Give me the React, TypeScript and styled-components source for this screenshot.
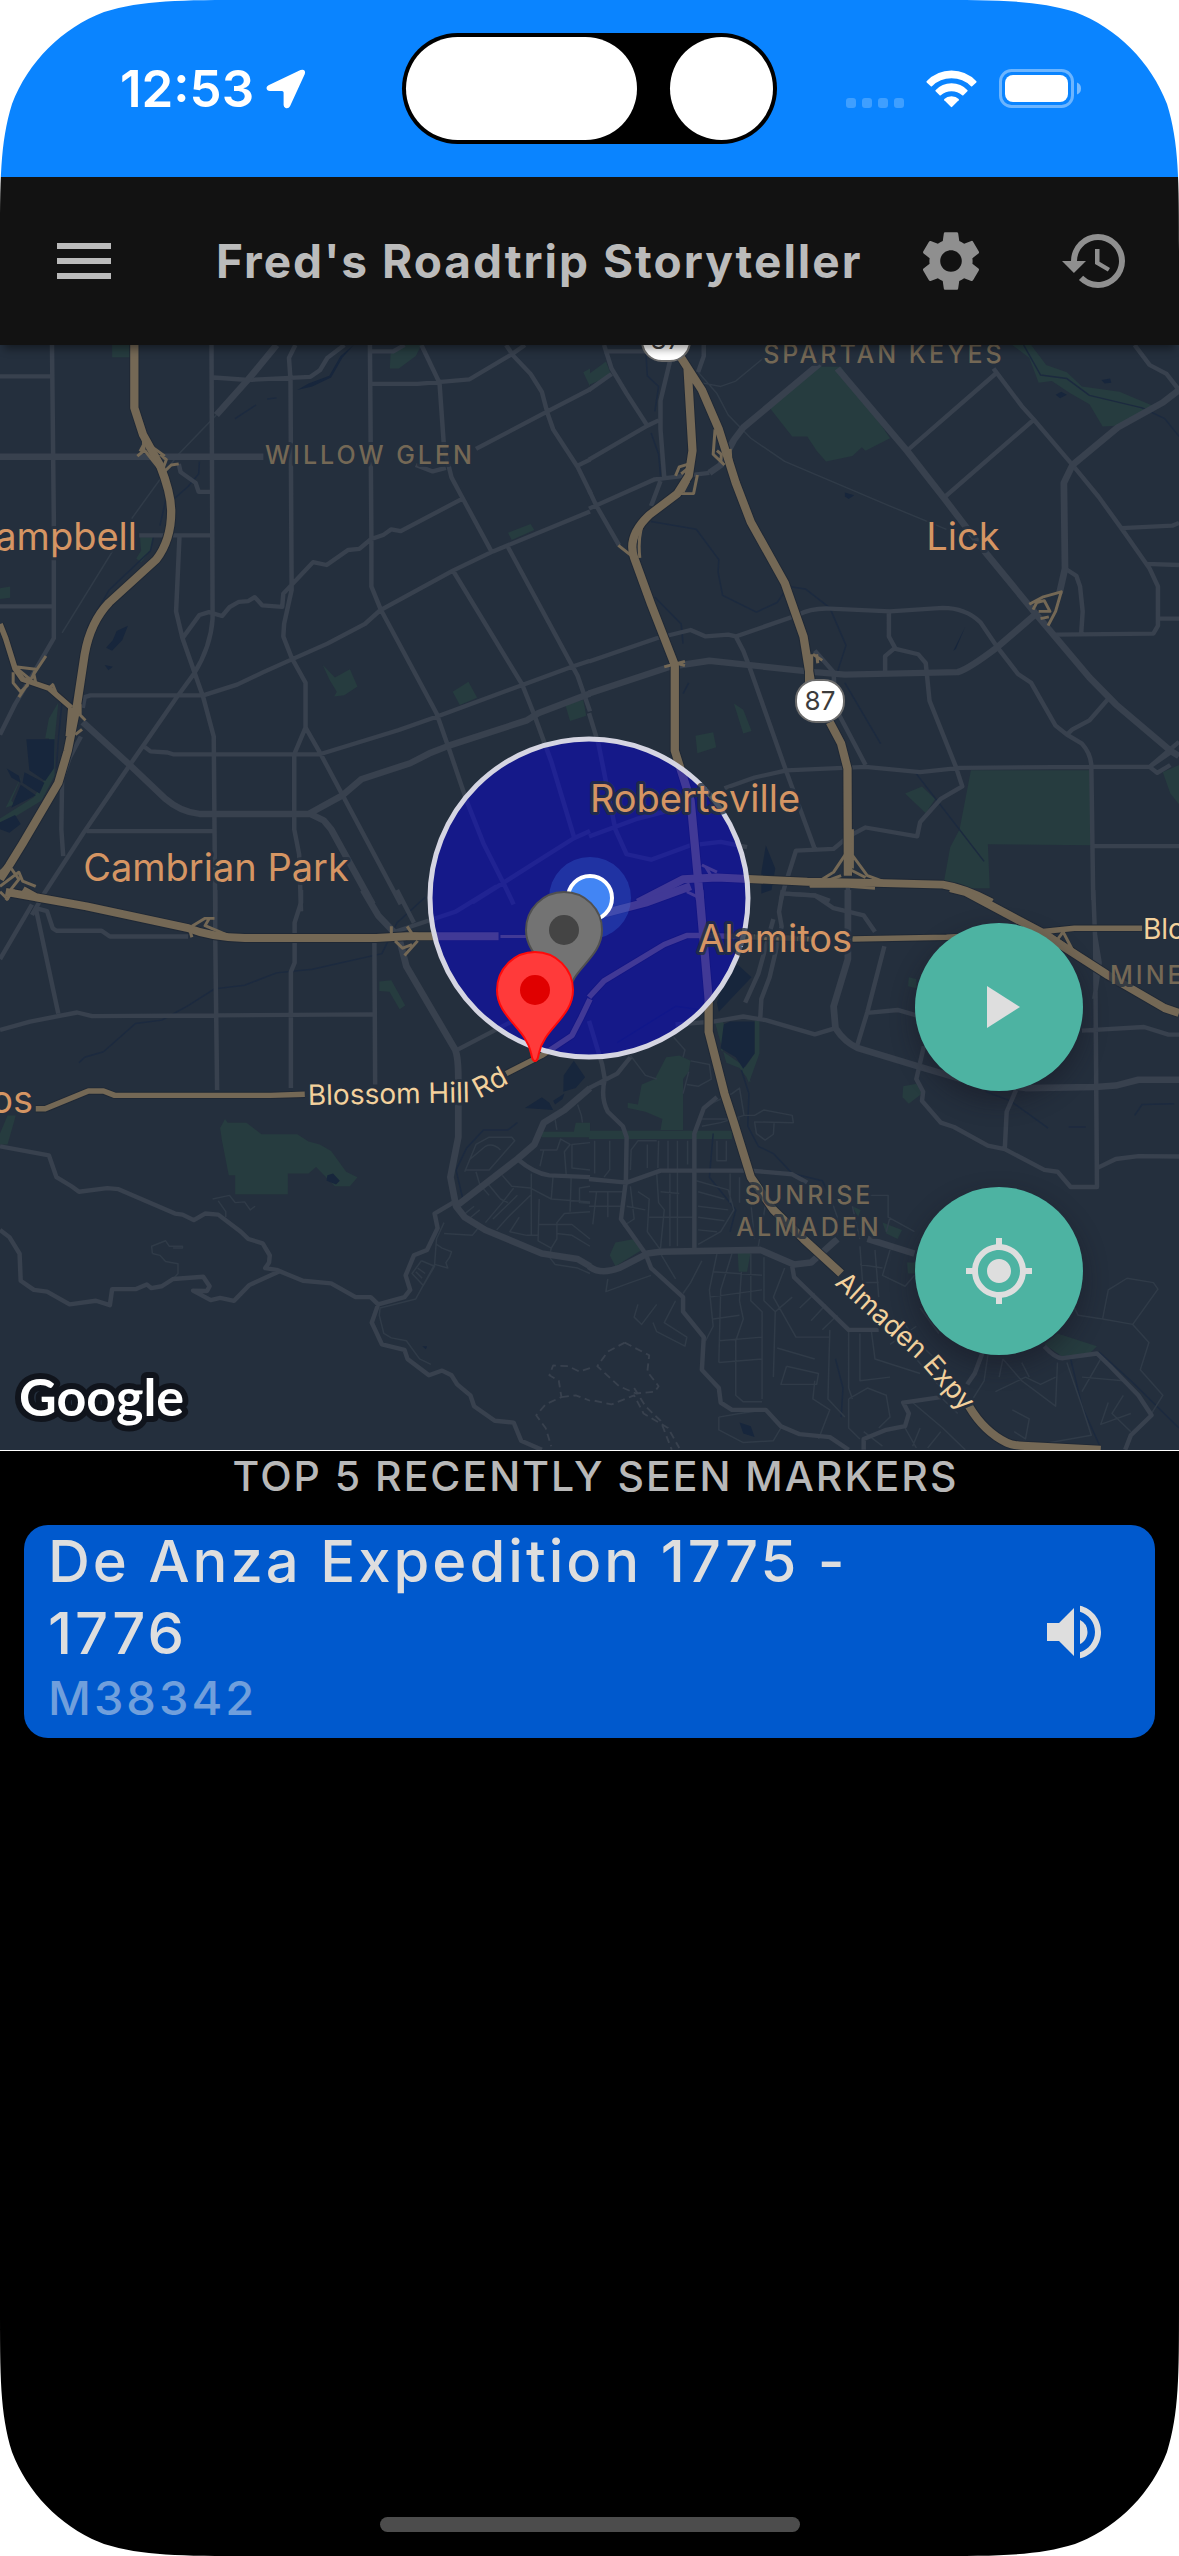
import React from "react";
import styled, { createGlobalStyle } from "styled-components";
import {
  MdHistory,
  MdMenu,
  MdMyLocation,
  MdPlayArrow,
  MdSettings,
  MdVolumeUp,
} from "react-icons/md";

const sans = `Inter, "Liberation Sans", sans-serif`;

const GlobalStyle = createGlobalStyle`
  *, *::before, *::after { box-sizing: border-box; }
  body { margin: 0; background: #000; }
  h1, h2, h3, p, ul { margin: 0; padding: 0; }
  button { border: 0; padding: 0; background: none; color: inherit; font: inherit; cursor: pointer; }
`;

const Screen = styled.div`
  position: relative;
  display: flex;
  flex-direction: column;
  min-height: 100vh;
  overflow: hidden;
  background: #000;
  font-family: ${sans};
`;

const Corner = styled.svg<{ $bottom?: boolean; $right?: boolean }>`
  position: absolute;
  z-index: 5;
  width: 253px;
  height: 253px;
  pointer-events: none;
  ${(p) => (p.$bottom ? "bottom: 0;" : "top: 0;")}
  ${(p) => (p.$right ? "right: 0;" : "left: 0;")}
  transform: scale(${(p) => (p.$right ? -1 : 1)}, ${(p) => (p.$bottom ? -1 : 1)});
`;

const StatusBar = styled.div`
  display: grid;
  grid-template-columns: 1fr auto 1fr;
  align-items: center;
  height: 177px;
  background: #0a84ff;
  color: #fff;
`;

const StatusLeft = styled.div`
  display: flex;
  align-items: center;
  gap: 12px;
  padding-left: 120px;
`;

const Clock = styled.span`
  font-size: 51px;
  font-weight: 600;
  line-height: 60px;
`;

const Island = styled.div`
  display: flex;
  justify-content: space-between;
  align-items: center;
  width: 375px;
  height: 111px;
  padding: 4px;
  border-radius: 56px;
  background: #000;
`;

const IslandPill = styled.span<{ $width: number }>`
  width: ${(p) => p.$width}px;
  height: 103px;
  border-radius: 52px;
  background: #fff;
`;

const StatusRight = styled.div`
  display: flex;
  justify-content: flex-end;
  align-items: flex-end;
  gap: 22px;
  height: 39px;
  padding-right: 98px;
`;

const AppBar = styled.header`
  position: relative;
  z-index: 2;
  display: flex;
  align-items: center;
  height: 168px;
  padding-right: 12px;
  background: #121212;
  box-shadow: 0 8px 8px -4px rgba(0, 0, 0, 0.4);
`;

const BarButton = styled.button<{ $width: number; $color: string }>`
  display: flex;
  flex: none;
  justify-content: center;
  align-items: center;
  width: ${(p) => p.$width}px;
  height: 144px;
  color: ${(p) => p.$color};
  font-size: 72px;
`;

const Title = styled.h1`
  flex: 1;
  padding-left: 48px;
  color: #bbb;
  font-size: 46px;
  font-weight: 700;
  line-height: 60px;
  letter-spacing: 2px;
  white-space: nowrap;
`;

const MapPanel = styled.section`
  position: relative;
  border-bottom: 1px solid #fff;
`;

const MapCanvas = styled.svg`
  display: block;
  width: 100%;
  background: #242f3d;
`;

const MapActions = styled.div`
  position: absolute;
  right: 96px;
  bottom: 95px;
  display: flex;
  flex-direction: column;
  gap: 96px;
`;

const RoundButton = styled.button`
  display: flex;
  justify-content: center;
  align-items: center;
  width: 168px;
  height: 168px;
  border-radius: 50%;
  background: #4db3a2;
  color: #dedede;
  font-size: 72px;
  box-shadow: 0 10px 24px rgba(20, 20, 30, 0.45);
`;

const Recent = styled.section`
  display: flex;
  flex-direction: column;
  gap: 24px;
`;

const RecentHeading = styled.h2`
  padding-left: 12px;
  color: #b8b8b8;
  font-size: 41px;
  font-weight: 500;
  line-height: 50px;
  letter-spacing: 2px;
  text-align: center;
`;

const MarkerList = styled.ul`
  display: flex;
  flex-direction: column;
  gap: 24px;
  padding: 0 24px;
  list-style: none;
`;

const MarkerCard = styled.li`
  display: flex;
  align-items: center;
  gap: 96px;
  padding: 0 45px 12px 24px;
  border-radius: 24px;
  background: #0059cd;
`;

const MarkerText = styled.div`
  flex: 1;
`;

const MarkerName = styled.h3`
  color: #dedede;
  font-size: 58px;
  font-weight: 500;
  line-height: 72px;
  letter-spacing: 3px;
`;

const MarkerCode = styled.p`
  color: #709fdc;
  font-size: 47px;
  font-weight: 500;
  line-height: 57px;
  letter-spacing: 3px;
`;

const SpeakButton = styled.button`
  display: flex;
  margin-top: 12px;
  color: #dedede;
  font-size: 72px;
`;

const HomeArea = styled.div`
  display: flex;
  justify-content: center;
  margin-top: auto;
  padding-bottom: 24px;
`;

const HomeIndicator = styled.span`
  width: 420px;
  height: 15px;
  border-radius: 8px;
  background: #4c4c4c;
`;

const ROAD = "#38414e";
const HIGHWAY = "#746855";
const PARK = "#263c3f";
const WATER = "#17263c";

type Tile = {
  transform: string;
  parks: string;
  water: string;
  creeks: string;
  lanes: string;
  trails: string;
  roads: string;
  avenues: string;
  ramps: string;
  expressways: string;
  highways: string;
};

const tiles: Tile[] = [
  {
    transform: "translate(0 340) scale(.37628 .35714)",
    parks:
      "M298 0H346V48H298ZM1038 38L1075 14H1120L1105 45L1060 80H1036ZM372 552H408L400 590L375 622L362 612L375 590ZM0 695L27 690V722L0 725ZM858 910L890 945L930 922L950 970L915 995L888 998L895 985L875 950ZM1203 985L1245 957L1268 1002L1222 1022ZM1350 540L1410 515L1420 532L1360 560ZM1502 1020L1550 1008L1558 1052L1515 1067ZM155 1015L145 1120V1220L110 1290L0 1360V1340L90 1280L130 1210V1115H120L130 1060ZM1550 90L1568 80V130ZM15 1310L60 1215L30 1290L40 1300Z",
    water:
      "M70 1118H145L143 1200L120 1235L78 1205ZM65 1210L118 1240L105 1270L60 1240ZM55 1245L95 1275L30 1310ZM0 1350L40 1330L55 1355L25 1380L0 1370ZM300 840L310 815L340 800L325 840L298 870L282 862ZM278 910L300 915L288 925ZM875 100L905 45L940 14L910 50L880 105L830 130L790 140L820 122ZM18 1200L50 1220L55 1240L30 1225Z",
    creeks:
      "M408 550L400 590L290 700L235 800L215 920L190 1020M165 1010L155 1120L150 1200M530 340L528 375L500 410L462 445M625 220L680 182M710 165L735 162M440 450L425 520",
    lanes: "M575 210L470 325L350 500M300 590L165 820",
    trails: "",
    roads:
      "M138 0L143 500V835L85 940L40 1020L0 1105M0 102H135M0 746H140M562 0L565 780Q560 860 515 935L470 1000L345 1190L225 1375L120 1545L85 1610M568 105L660 112L825 103L850 85L870 50L915 14M785 14L768 50L772 110L775 700L755 795L753 830L775 890L812 960V1085L782 1160V1370L795 1440L800 1600M812 1085L850 1155L1065 1580M983 0L987 550V690L1012 755L1160 1045L1195 1150L1240 1290L1285 1410L1340 1525L1365 1580M983 32H1045L1075 14M985 122L1110 123L1248 110L1360 40L1395 14M1120 14L1168 120L1180 300L1200 385L1228 440L1305 590M1345 14L1365 45L1410 95L1440 145L1455 205L1470 250L1535 355L1570 430M1265 305L1455 200L1568 138M1535 352L1568 335M485 835L530 770L555 762L590 773L610 748L635 733L660 731L677 720L697 743L750 747L753 710L780 680L832 622L868 630L925 588L955 585L985 558L1020 545L1040 530L1065 535L1228 445M370 547H560M477 550L468 760L485 835L540 1000L568 1110L572 1600M475 347L480 370L520 400L528 425H560M220 1030L225 1000L240 995H540L630 965L700 930L780 892L870 850L970 795L1010 757L1205 645L1310 592L1568 480M1205 648L1388 965L1420 1050L1465 1180L1525 1390M1350 580L1535 940L1568 1040M385 1140L400 1152L445 1155L460 1160H850L1060 1092L1160 1055L1390 965L1520 915L1568 898M230 1375H570M215 1110L185 1170L165 1230L163 1370L168 1445M1105 350L1150 368L1185 358M1255 1575L1450 1445L1525 1395L1568 1375",
    avenues:
      "M0 327H700M735 14L660 110L575 210M220 1070L345 1190L440 1285Q480 1322 530 1327H820L910 1275L960 1230L1090 1185L1140 1158L1195 1135L1400 1065L1430 1045L1568 990M820 1325L860 1345L880 1370L990 1580",
    ramps:
      "M380 270L383 310L365 325M383 290L372 312M385 310L430 370M425 320L442 335L435 355M405 300L438 325M475 347L455 350L435 370M40 915L95 922L85 945L50 1000M122 885L90 935L95 960M35 930V960L55 985L75 965M40 915L80 950M130 975L140 965L150 990M213 1020L213 1050L227 1065M200 1105L218 1090M0 1490L30 1460M0 1530L50 1490L60 1515L95 1530M15 1568L40 1540M30 1480L50 1510L20 1550",
    expressways: "M0 795L15 835L40 920L60 950L130 975L190 1030",
    highways:
      "M357 0V190L380 265L425 350Q455 430 455 480Q455 560 415 615L290 735Q240 790 225 880L205 1020L180 1150L155 1240L60 1410L25 1470L0 1510M192 1030L185 1110",
  },
  {
    transform: "translate(589 340) scale(.37628 .35714)",
    parks:
      "M600 75H670L800 275L735 310L725 300L700 325L630 340L605 310L580 270H540L480 190ZM1125 14H1175L1215 70L1270 90L1310 130L1410 145L1500 185L1405 240L1365 242L1330 180L1280 150L1230 115L1195 120L1170 50ZM1015 1205H1335V1415L1060 1412L1065 1535H940L960 1420L985 1370ZM283 1108L330 1098L338 1140L288 1157ZM385 1018L410 1035L432 1095L410 1102ZM840 1270L885 1250L920 1285L895 1325ZM0 95L45 60L60 100L0 125ZM1525 1210L1568 1190V1300L1545 1270Z",
    water:
      "M680 427L705 435L690 445L680 438ZM1240 153L1255 145L1270 153L1252 163ZM1362 112L1385 108L1388 120L1370 122ZM458 1490L470 1415L495 1480L485 1540L458 1550ZM1000 803L968 870L975 865ZM1025 825L1010 865Z",
    creeks:
      "M150 14L155 100L185 130L175 200M165 260L185 320L190 380M1155 14L1200 98L1270 108L1330 155L1470 190L1530 220L1568 270M165 508L285 530L345 615L343 650L355 715L445 762L500 735L530 690L575 697L640 750L683 855L660 930M680 960L775 1130M175 720L245 795L250 850M265 960L250 990M870 1215L1050 1460",
    lanes:
      "M290 90L340 150L370 210L430 275L520 340L800 465L950 530M300 120L350 130L390 115L470 45",
    trails: "",
    roads:
      "M40 14L60 80L100 150L155 240M0 335L155 240L185 225M0 140L60 95M40 32H150M305 14V45L290 90M215 60L190 170V250L200 385M0 420L20 465L80 575M190 395L165 465M0 472L175 390L320 372M845 310L1080 95M945 440L1180 225M1415 527L1550 520L1568 512M1480 627L1568 630M1515 780H1568M1075 80L1150 185L1180 220L1285 350L1355 440L1420 535L1490 640L1512 690V800L1500 822L1240 825M1450 14L1490 70L1535 95L1568 140M1265 640L1295 660L1305 690L1312 760L1308 822M0 900L180 835L270 812L310 830L370 825L390 830L555 770Q590 750 640 752L800 760L940 750Q1000 750 1040 790L1085 860L1140 935L1175 960L1240 1080L1270 1105L1310 1130Q1335 1160 1335 1195M390 830L410 870L428 920L525 1210L600 1425M797 760V830L815 865L875 880L895 905L905 1010L975 1195L992 1250L935 1285L880 1350L872 1390L735 1365L690 1390L650 1425L550 1430L520 1530L510 1568M810 865L787 885V930M600 870L650 930L655 1030L735 1190M360 1255L440 1225L525 1205L735 1195L880 1210L985 1198L1335 1195H1490L1545 1155M1568 1125L1490 1195L1510 1212L1545 1190M1380 1005L1330 1065L1285 1090L1270 1105M1335 1195L1340 1568M1340 1417H1568M0 1045L25 1130L70 1370L100 1440L165 1455L270 1415L350 1405L420 1420M0 1390L130 1340L240 1310M688 1530V1568M520 1550L600 1555L640 1570",
    avenues:
      "M320 372L350 350L385 280L410 245L620 60M1568 140L1525 175L1405 245L1285 350L1262 400L1265 640L1250 710M0 990L215 915L320 898L600 930L680 937L980 930Q1010 920 1085 860L1190 765M660 80L845 310L945 445L985 500M985 500L1050 590L1190 770L1330 945L1400 1020L1545 1150L1568 1165",
    ramps:
      "M150 500Q128 540 135 610M120 610L78 575M230 380L240 355L262 348M245 375L262 360M288 378L278 430L235 430M265 395L250 425M335 250L330 320L360 350M340 310L352 320L350 340M375 305L378 350M200 915L255 900M215 900L255 912M595 880L620 897M605 880L608 905M688 1430L650 1490L620 1510M698 1440L740 1500L780 1515M688 1480L735 1505M670 1500L590 1530H690L760 1535M1170 740L1205 720L1255 705L1240 760L1220 800M1180 755L1190 735L1210 730L1225 760L1195 760M1200 780L1222 775M300 1470L340 1490M260 1545L290 1560M310 1475L330 1510M682 1370V1480M700 1370V1480",
    expressways: "",
    highways:
      "M245 50L300 140L345 250L390 400L430 510L520 680L570 830L590 960M640 1070L670 1130L687 1200L688 1500M262 80L275 310L265 380L235 430L160 490Q100 550 120 610L165 740L228 910V1150L270 1290L295 1568M130 1575L250 1510L340 1505L580 1517L760 1520L940 1525Q1000 1535 1070 1575M585 880V960",
  },
  {
    transform: "translate(0 890) scale(.37628 .36352)",
    parks:
      "M598 630L605 640H655L695 672H790L820 692L850 700L880 718L920 775L950 790L930 815H890L840 762L820 780H765V837H625V785H608L590 690L585 655ZM20 620H42L20 700H0V670ZM1008 252L1040 248L1077 318L1062 328L1035 280L1008 278ZM1435 665H1525L1530 640H1568V680H1440Z",
    water:
      "M870 785L885 780L903 800L893 810L868 800ZM1395 600L1440 570L1460 585L1470 605ZM1498 510L1525 470L1555 515L1530 545L1497 555ZM1470 580L1500 560L1495 575L1475 590ZM1122 1255L1135 1255L1132 1263Z",
    creeks:
      "M210 475L225 460L275 445L360 367L430 358L500 318L570 272L650 262L735 228L830 218L1015 175L1055 90L1130 20M1375 640L1350 660L1285 660L1240 710L1212 770L1230 850",
    lanes:
      "M565 850L610 840L625 860L650 858L665 880L678 870M580 855L600 885V900M405 1000L403 980L440 965L450 980H485V985H460M405 1000L425 1005L440 1022L473 1028V1055L460 1070M1235 775L1265 700L1300 680L1360 680L1368 690L1300 770H1235M1250 740L1290 705Q1310 695 1330 715M1265 775L1275 810L1300 840M1290 800L1330 850L1350 860M1335 785L1360 815L1410 820L1465 850L1568 858M1365 820L1335 860L1290 915M1410 840L1350 900L1320 935M1375 840L1310 905M1260 870L1230 895M1275 880L1240 910M1412 780V950M1433 850L1430 965L1465 985L1480 960V915L1500 890L1568 885M1380 900L1355 940L1400 950H1430M1430 920L1520 920L1568 960M1480 945L1520 950L1568 980M1470 785L1465 850M1518 790L1515 885M1568 815L1540 820V860L1568 862M1435 715H1480L1490 685L1515 700L1500 720L1505 785M1568 695L1520 700V765L1568 770M1445 715L1435 760M1475 630L1480 660M1535 590L1545 620L1548 640M1180 915L1160 960L1155 1030L1105 1125L1010 1150L1008 1170L1020 1220L1040 1232L1080 1240L1115 1290L1145 1305M1180 945L1255 950L1275 925M1160 975L1175 985L1200 995L1195 1010L1185 1025L1190 1040L1155 1030M1120 1020L1095 1055L1125 1088L1155 1035L1120 1020M1110 1040L1130 1055M1105 1050L1122 1068M1465 985L1460 1010L1475 1030L1535 1040L1568 1055",
    trails:
      "M1568 1315L1540 1325L1510 1310L1470 1308L1460 1335L1485 1350L1492 1395L1450 1415L1425 1445L1450 1480L1465 1530M1492 1395L1530 1390L1568 1405",
    roads:
      "M95 50L125 58L140 105L150 112H270L292 128H500M95 50L155 340M85 40L0 190M0 385L80 362L205 337L245 347L990 342M572 0V130L577 550M800 0V35L783 90V200L773 225V545M995 145L997 535M1055 0L1100 90M1050 115L1210 60L1320 -10M1215 440L1400 340M1212 855L1155 890L1163 930L1135 990L1100 1005L1078 1060L1090 1100L1075 1120L1005 1140L988 1190L1015 1250L1075 1265L1083 1290L1140 1335L1175 1322L1200 1335L1215 1360L1250 1390L1260 1420L1315 1460L1365 1465L1385 1515L1440 1540M0 705L130 730L150 790L190 815L210 830L285 820L315 823L465 890L485 893L515 908L545 890L580 893L640 940L660 960L698 972L717 1005L715 1025L705 1040L735 1045L805 1075L880 1082L945 1120L985 1120L1005 1140M0 935L25 955L52 1000L55 1075L90 1100L125 1105L185 1140L255 1130L292 1142L298 1098H360L390 1085L402 1095L430 1090L460 1070L540 1064L557 1090L550 1103L513 1102L560 1128L585 1122L622 1130L662 1087L740 1050M1375 740Q1420 780 1460 785L1568 790",
    avenues:
      "M965 0L1005 70L1060 130L1080 210L1210 440Q1218 460 1218 520V680L1197 790L1212 870L1235 900L1290 935L1440 1000L1535 1015L1568 1035M1212 870L1375 740L1420 700L1445 640L1500 605L1568 545",
    ramps:
      "M510 100L545 78H570M555 80L545 98L600 122M503 105L510 130M1040 100V130M1082 100L1095 120L1140 125M1110 140L1075 180M1050 140L1070 160L1095 150M1330 128H1400M0 5L20 25L30 0",
    expressways:
      "M95 602L120 602L235 553H275L305 565H720L810 562M1345 505L1440 455L1520 400L1545 350L1568 300",
    highways:
      "M15 5L230 45L500 105Q560 130 650 132H1000L1080 127H1325M60 0L95 20L230 45",
  },
  {
    transform: "translate(589 890) scale(.37628 .36352)",
    parks:
      "M205 460L240 455L270 470L265 500L250 520V660H190L195 630L150 610L103 600V585L130 590L140 535L175 520ZM0 662H380V685H0ZM335 365L355 360L370 400L350 440L420 490L430 530L400 490L365 475ZM440 360H453V450L425 530L410 495L440 450ZM70 970L120 960L140 990L70 1035L55 1005ZM395 995H430L420 1050H398ZM1210 1250L1245 1220L1350 1255L1330 1275L1265 1288ZM835 540L870 533L885 560L850 588L833 570ZM780 915L832 935L820 960L790 945ZM850 240L870 245V270L848 265ZM845 1025H870V1055H848ZM700 870L722 880L715 900Z",
    water:
      "M358 370L375 362H440V450L410 492L390 460L350 435ZM400 1465L430 1475L440 1505L410 1495ZM365 230L395 205L432 240L345 335L340 310Z",
    creeks:
      "M405 495L425 560L422 650L450 705L490 725L540 780L620 800L640 840M330 670L320 790L390 880L375 940M1055 555L1120 580L1220 655M1275 652H1320M1450 620L1470 590L1555 588M1280 1290L1310 1420L1360 1535M1355 1270L1440 1350L1568 1480M655 1290L675 1370L670 1450M75 420L230 320L300 330",
    lanes:
      "M15 690V780M55 690V770L40 790M110 770L112 715L130 690H180M155 700V765M185 690L183 765M210 690V770M235 690V980M262 690V755M340 690V745H365V690M300 600L380 560L400 545L412 620L350 640L300 650M295 630H400M412 620H440L465 605L540 620L543 640L440 638L445 670L468 688L490 672L492 640M110 455L150 510L180 520M225 405L255 440L250 460M270 470L320 480L325 520L290 540L260 535M265 500L250 560M0 830H95M0 870H85M20 830L10 920M50 830V900M110 815L120 905L90 925M130 830L160 850L155 940L190 990M190 830L240 835M180 780L185 860L200 880L190 985M215 780V980M100 870L150 880M160 900H280M285 800L370 825L385 880L350 940L290 975M290 830L360 850M290 870L370 880M290 900L360 910M290 935L340 940M375 780V860M400 790V860M430 860L440 960M470 860L450 980M640 840L660 900V950M700 870L720 960M740 840H795V900L865 940M800 900L790 940M340 1000L320 1100L330 1200L310 1240M380 1000L350 1100L345 1300M405 1050L400 1130L410 1180L390 1240V1390L410 1408H460M430 1000V1130L460 1160V1400M465 1010V1130L495 1160L490 1340M300 1020L270 1080L250 1110M190 1000L230 1070M165 1060L110 1080L45 1105L50 1070M330 1050L460 1060M320 1120L460 1100M330 1180L400 1170M345 1240L460 1230M345 1300L460 1290M520 1040L490 1120L550 1230H640M495 1160L540 1120M500 1260L600 1290M525 1310L510 1360H605L610 1330L525 1310M600 1110L560 1150M630 1140L590 1185M660 1170L620 1210M640 1210L635 1400L680 1450M690 1210L690 1370L700 1400M720 1220V1350L800 1340M750 1210L760 1290L880 1330M600 1350L595 1400L640 1430L610 1510M690 1400L740 1370L790 1390L800 1450L770 1480M690 1400V1480L720 1510M720 980L730 1120L760 1190M760 990L770 1120M800 990L780 1060L840 1090L865 1060M720 1030L780 1040M730 1080L770 1080M800 1250L870 1200M830 1180L870 1240L950 1320M880 1150L930 1220M870 1290L960 1400M1060 1280L1050 1350L1020 1400M1100 1290L1150 1350L1240 1420L1245 1300M1080 1380L1160 1340L1200 1360L1240 1340M1150 1300L1170 1340M1100 1290L1090 1340M1270 1300L1310 1420L1335 1500L1170 1530M1310 1340L1420 1350M1360 1290L1310 1380M1380 1410L1360 1470L1440 1440M1420 1390L1390 1440L1440 1490M1125 1430L1170 1455L1160 1510L1130 1490M1365 1180L1380 1100L1430 1068L1500 1080L1512 1098L1445 1195L1365 1180L1300 1170L1290 1150M1445 1195L1488 1245L1465 1320L1525 1390L1495 1440M130 1140L120 1175L140 1195L180 1140M170 1190L180 1215L255 1255L260 1230L200 1190L230 1130M345 1450L400 1440L470 1430M345 1450L345 1485L410 1520L490 1515L510 1480M730 1490L780 1530M840 1480L870 1535M880 1480L860 1530M935 1490L900 1535M860 1410L940 1480L1000 1540M940 1400L980 1440",
    trails:
      "M95 1245L160 1280L155 1325L185 1365L175 1380L125 1385L80 1365L22 1310L50 1270L95 1245M15 1405L60 1415L120 1390L145 1440L210 1480L240 1535M120 1370L150 1420L190 1460L220 1540",
    roads:
      "M515 0L505 60L512 100L480 240L458 300L455 355M415 310L450 230L490 80M230 370L330 362L410 348L470 358L600 397L655 380M520 10L600 15L650 50L730 70L760 115M785 155L740 335L712 430M740 338L820 330L870 345M890 430L870 520L888 555L885 580L935 640L970 652L1060 703L1105 713L1210 770L1245 775L1280 817H1350L1345 130L1340 0M1345 125L1357 200L1343 300M1310 387L1475 377L1540 398H1568M1135 550L1110 610L1105 713M1350 765L1400 740L1460 732L1568 733M0 545L75 505L110 460M0 360L35 480L42 520Q30 570 50 610L90 650L100 680L98 800L85 905L150 1000L165 1040L250 1120V1160L305 1230L300 1320L345 1370L350 1410L380 1430L470 1430L510 1475L560 1497L640 1505L690 1540M340 570L305 600L280 670V985M0 795L100 805L190 772H430L540 782L580 805M540 1035L545 1065L690 1210H770M730 1540V1510L790 1485L840 1475L850 1440L835 1410L935 1395M1005 1360L1025 1330L1045 1275M1210 1255Q1240 1290 1260 1288L1350 1275L1385 1310L1460 1390L1495 1445L1440 1500L1425 1540",
    avenues:
      "M688 0V190L650 320L655 380Q680 420 715 435L875 485L990 520L1160 545L1345 542L1400 538L1460 522H1568M0 1035Q30 1060 80 1040L155 1000L190 995L455 990L545 1030L590 1025L660 960M740 960L865 1000",
    ramps: "M1235 150L1260 115L1285 165M1215 115L1300 175",
    expressways:
      "M700 135L950 130L1200 115L1290 105H1470M0 295L40 250L200 150L260 125H310L600 135",
    highways:
      "M0 75L150 35L270 -10M293 0L318 300V390L360 560L385 640L430 790L490 880L570 960L670 1055M1010 1420Q1050 1490 1110 1520Q1130 1530 1180 1530L1360 1540M960 -5L1000 5Q1100 60 1200 115L1380 235L1530 325L1568 338",
  },
];

const Line = ({ d, color, width, dash }: { d: string; color: string; width: number; dash?: string }) => (
  <path
    d={d}
    fill="none"
    stroke={color}
    strokeWidth={width}
    strokeLinejoin="round"
    strokeDasharray={dash}
  />
);

const MapLabel = styled.text<{ $size: number; $color: string; $spacing?: number; $weight?: number }>`
  font-family: ${sans};
  font-size: ${(p) => p.$size}px;
  font-weight: ${(p) => p.$weight ?? 400};
  fill: ${(p) => p.$color};
  letter-spacing: ${(p) => p.$spacing ?? 0}px;
  paint-order: stroke;
  stroke: rgba(36, 47, 61, 0.8);
  stroke-width: 6px;
  stroke-linejoin: round;
`;

const Wordmark = styled.text`
  font-family: Lato, sans-serif;
  font-size: 52px;
  font-weight: 700;
  fill: #fff;
  paint-order: stroke;
  stroke: #10141c;
  stroke-width: 12px;
  stroke-linejoin: round;
`;

const towns = [
  { name: "Campbell", x: 137, y: 550, anchor: "end" },
  { name: "Cambrian Park", x: 216, y: 881, anchor: "middle" },
  { name: "Lick", x: 963, y: 550, anchor: "middle" },
  { name: "Robertsville", x: 695, y: 812, anchor: "middle" },
  { name: "Alamitos", x: 775, y: 952, anchor: "middle" },
  { name: "Los Gatos", x: 33, y: 1113, anchor: "end" },
] as const;

const districts = [
  { name: "WILLOW GLEN", x: 370, y: 464, anchor: "middle" },
  { name: "SPARTAN KEYES", x: 884, y: 363, anchor: "middle" },
  { name: "SUNRISE", x: 809, y: 1204, anchor: "middle" },
  { name: "ALMADEN", x: 809, y: 1236, anchor: "middle" },
  { name: "MINERAL", x: 1110, y: 984, anchor: "start" },
] as const;

const Shield = ({ x, y }: { x: number; y: number }) => (
  <g transform={`translate(${x} ${y})`}>
    <rect x="-24" y="-21" width="48" height="42" rx="20" fill="#fff" stroke="#6b6b6b" strokeWidth="2" />
    <text textAnchor="middle" y="9" fontFamily={sans} fontSize="26" fill="#3c3c3c">
      87
    </text>
  </g>
);

const Pin = ({ x, y, fill, edge, dot }: { x: number; y: number; fill: string; edge: string; dot: string }) => (
  <g transform={`translate(${x} ${y})`}>
    <path
      d="M0 71C-3 71 -3 67 -4 63C-9 38 -38 27 -38 0A38 38 0 1 1 38 0C38 27 9 38 4 63C3 67 3 71 0 71Z"
      fill={fill}
      stroke={edge}
      strokeWidth="2"
    />
    <circle r="15" fill={dot} />
  </g>
);

const RoadMap = () => (
  <MapCanvas viewBox="0 345 1179 1105" role="img" aria-label="Map of the area around Alamitos">
    <defs>
      <path id="expy" d="M834 1284L914 1357Q920 1362 926 1370L985 1438" />
    </defs>
    {tiles.map((t) => (
      <g key={t.transform} transform={t.transform}>
        <path d={t.parks} fill={PARK} />
        <path d={t.water} fill={WATER} />
        <Line d={t.creeks} color="#1c2a3f" width={4} />
        <Line d={t.lanes} color="#303b48" width={4} />
        <Line d={t.trails} color={ROAD} width={5} dash="20 12" />
      </g>
    ))}
    {tiles.map((t) => (
      <g key={t.transform} transform={t.transform}>
        <Line d={t.roads} color={ROAD} width={12} />
        <Line d={t.avenues} color={ROAD} width={18} />
      </g>
    ))}
    {tiles.map((t) => (
      <g key={t.transform} transform={t.transform}>
        <Line d={t.highways} color="#1f2835" width={27} />
        <Line d={t.expressways} color="#1f2835" width={20} />
      </g>
    ))}
    {tiles.map((t) => (
      <g key={t.transform} transform={t.transform}>
        <Line d={t.ramps} color={HIGHWAY} width={8} />
        <Line d={t.expressways} color={HIGHWAY} width={15} />
        <Line d={t.highways} color={HIGHWAY} width={22} />
      </g>
    ))}
    <circle cx="589" cy="898" r="159" fill="rgba(5,1,231,.45)" stroke="#d5d5e2" strokeWidth="5" />
    <Shield x={820} y={701} />
    <Shield x={666} y={340} />
    {districts.map((d) => (
      <MapLabel
        key={d.name}
        x={d.x}
        y={d.y}
        textAnchor={d.anchor}
        $size={25}
        $color={HIGHWAY}
        $spacing={3}
        $weight={500}
      >
        {d.name}
      </MapLabel>
    ))}
    {towns.map((t) => (
      <MapLabel key={t.name} x={t.x} y={t.y} textAnchor={t.anchor} $size={38} $color="#d59563">
        {t.name}
      </MapLabel>
    ))}
    <MapLabel transform="translate(308 1105) rotate(-1)" $size={28} $color="#f3d19c">
      Blossom Hill
    </MapLabel>
    <MapLabel transform="translate(479 1099) rotate(-28)" $size={28} $color="#f3d19c">
      Rd
    </MapLabel>
    <MapLabel x={1143} y={939} $size={28} $color="#f3d19c">
      Blossom
    </MapLabel>
    <MapLabel $size={27} $color="#f3d19c">
      <textPath href="#expy">Almaden Expy</textPath>
    </MapLabel>
    <circle cx="590" cy="898" r="41" fill="rgba(66,133,244,.25)" />
    <circle cx="590" cy="898" r="22" fill="#4285f4" stroke="#fff" strokeWidth="4" />
    <Pin x={564} y={930} fill="#737373" edge="#505050" dot="#444" />
    <Pin x={535} y={990} fill="#ff3a3a" edge="#ff0a0a" dot="#e00000" />
    <Wordmark x="19" y="1416">
      Google
    </Wordmark>
  </MapCanvas>
);

const cornerPath =
  "M0 0H252C180 0 143 0 104 12C62 28 28 62 12 104C0 143 0 180 0 252Z";

const LocationArrow = () => (
  <svg width="40" height="40" viewBox="0 0 40 40" aria-hidden="true">
    <path
      d="M2.5 16.2L34.5 1Q40 -.5 38.8 5L24 37.2Q22.5 40 19.5 39Q17.6 38.200 17.600 36V23.500Q17.600 22 16 22H4Q.8 21.800 .5 19Q.5 17.200 2.500 16.200Z"
      fill="#fff"
    />
  </svg>
);

const CellDots = () => (
  <svg width="58" height="10" viewBox="0 0 58 10" aria-hidden="true">
    {[0, 16, 32, 48].map((x) => (
      <rect key={x} x={x} width="10" height="10" rx="3" fill="#fff" opacity=".22" />
    ))}
  </svg>
);

const Wifi = () => (
  <svg width="51" height="38" viewBox="0 0 51 38" aria-hidden="true">
    <g fill="#fff">
      <path d="M.6 11.200Q11 .5 25.500 .5T50.400 11.200Q50.800 11.800 50.300 12.400L46.200 16.300Q45.600 16.700 45 16.200Q37 8.300 25.500 8.300T6 16.200Q5.400 16.700 4.800 16.300L.7 12.400Q.2 11.800 .6 11.200Z" />
      <path d="M9.500 20.200Q16 13.300 25.500 13.300T41.500 20.200Q41.900 20.800 41.400 21.300L37.400 25.200Q36.800 25.700 36.200 25.200Q31.500 21.200 25.500 21.200T14.800 25.200Q14.200 25.700 13.600 25.200L9.600 21.300Q9.100 20.800 9.500 20.200Z" />
      <path d="M18.300 29Q21 26.300 25.500 26.300T32.700 29Q33.200 29.600 32.700 30.200L26.200 36.800Q25.500 37.500 24.800 36.800L18.300 30.200Q17.800 29.600 18.300 29Z" />
    </g>
  </svg>
);

const Battery = () => (
  <svg width="82" height="39" viewBox="0 0 82 39" aria-hidden="true">
    <rect x="1.500" y="1.500" width="72" height="36" rx="11" fill="none" stroke="#fff" strokeWidth="3" opacity=".4" />
    <rect x="6" y="6" width="63" height="27" rx="8" fill="#fff" />
    <path d="M78 13.500Q82 15 82 19.500T78 25.500Z" fill="#fff" opacity=".45" />
  </svg>
);

const markers = [{ name: "De Anza Expedition 1775 - 1776", code: "M38342" }];

export default function App() {
  return (
    <>
      <GlobalStyle />
      <Screen>
        {[false, true].map((bottom) =>
          [false, true].map((right) => (
            <Corner key={`${bottom}${right}`} viewBox="0 0 253 253" $bottom={bottom} $right={right} aria-hidden="true">
              <path d={cornerPath} fill="#fff" />
            </Corner>
          ))
        )}
        <StatusBar>
          <StatusLeft>
            <Clock>12:53</Clock>
            <LocationArrow />
          </StatusLeft>
          <Island>
            <IslandPill $width={231} />
            <IslandPill $width={103} />
          </Island>
          <StatusRight>
            <CellDots />
            <Wifi />
            <Battery />
          </StatusRight>
        </StatusBar>
        <AppBar>
          <BarButton $width={168} $color="#bbb" aria-label="Open menu">
            <MdMenu />
          </BarButton>
          <Title>Fred's Roadtrip Storyteller</Title>
          <BarButton $width={144} $color="#8f8f8f" aria-label="Settings">
            <MdSettings />
          </BarButton>
          <BarButton $width={144} $color="#8f8f8f" aria-label="History">
            <MdHistory />
          </BarButton>
        </AppBar>
        <MapPanel>
          <RoadMap />
          <MapActions>
            <RoundButton aria-label="Play">
              <MdPlayArrow />
            </RoundButton>
            <RoundButton aria-label="Center on my location">
              <MdMyLocation />
            </RoundButton>
          </MapActions>
        </MapPanel>
        <Recent>
          <RecentHeading>TOP 5 RECENTLY SEEN MARKERS</RecentHeading>
          <MarkerList>
            {markers.map((m) => (
              <MarkerCard key={m.code}>
                <MarkerText>
                  <MarkerName>{m.name}</MarkerName>
                  <MarkerCode>{m.code}</MarkerCode>
                </MarkerText>
                <SpeakButton aria-label={`Speak ${m.name}`}>
                  <MdVolumeUp />
                </SpeakButton>
              </MarkerCard>
            ))}
          </MarkerList>
        </Recent>
        <HomeArea>
          <HomeIndicator />
        </HomeArea>
      </Screen>
    </>
  );
}
